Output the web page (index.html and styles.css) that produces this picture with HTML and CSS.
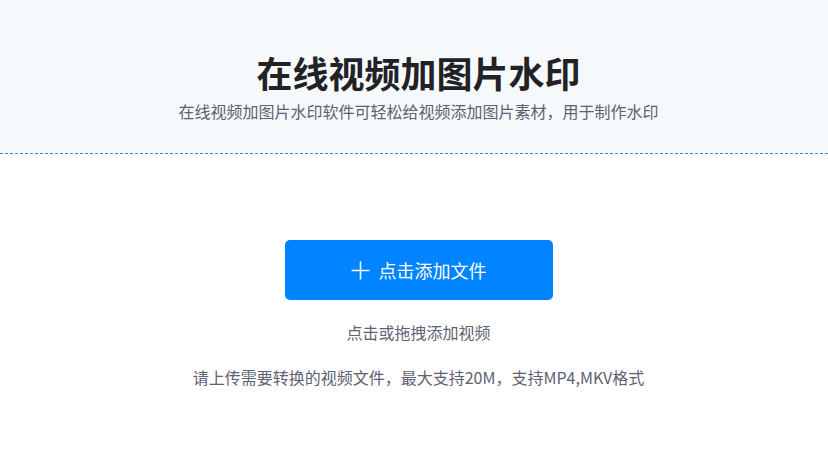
FILE: index.html
```html
<!DOCTYPE html>
<html lang="zh-CN">
<head>
<meta charset="utf-8">
<title>在线视频加图片水印</title>
<link rel="stylesheet" href="styles.css">
</head>
<body>
<header class="hero">
  <div class="inner">
    <h1 class="hero-title">在线视频加图片水印</h1>
    <p class="hero-sub">在线视频加图片水印软件可轻松给视频添加图片素材，用于制作水印</p>
  </div>
</header>
<main class="upload">
  <button class="upload-btn" type="button">
    <svg class="plus" width="19" height="19" viewBox="0 0 19 19" aria-hidden="true"><path d="M9.5 0.5V18.5M0.5 9.5H18.5" stroke="#fff" stroke-width="1.6" fill="none"/></svg>
    <span>点击添加文件</span>
  </button>
  <p class="upload-hint">点击或拖拽添加视频</p>
  <p class="upload-note">请上传需要转换的视频文件，最大支持20M，支持MP4,MKV格式</p>
</main>
</body>
</html>
```
FILE: styles.css
```css
* { box-sizing: border-box; }
html, body { margin: 0; padding: 0; background: #fff; }
body {
  font-family: "Microsoft YaHei", "Noto Sans CJK SC", "Noto Sans", sans-serif;
  width: 828px;
}
.hero {
  background: #f6f9fb;
  border-bottom: 1px dashed #3f8ad8;
  height: 154px;
  padding-top: 52px;
}
.inner {
  margin-left: 9px;
  text-align: center;
}
.hero-title {
  margin: 0;
  font-size: 36px;
  line-height: 40px;
  font-weight: 700;
  color: #222226;
}
.hero-sub {
  margin: 7px 0 0;
  font-size: 16px;
  line-height: 24px;
  color: #5d6272;
}
.upload {
  display: flex;
  flex-direction: column;
  align-items: center;
  padding-top: 86px;
  margin-left: 9px;
}
.upload-btn {
  display: flex;
  align-items: center;
  justify-content: center;
  gap: 9px;
  width: 268px;
  height: 60px;
  border: none;
  border-radius: 5px;
  background: #0084ff;
  color: #fff;
  font-family: inherit;
  font-size: 18px;
  padding: 0;
  cursor: pointer;
}
.plus { display: block; }
.upload-hint {
  margin: 20px 0 0;
  font-size: 16px;
  line-height: 24px;
  color: #5d6272;
}
.upload-note {
  margin: 21px 0 0;
  font-size: 16px;
  line-height: 24px;
  color: #5d6272;
}
```
